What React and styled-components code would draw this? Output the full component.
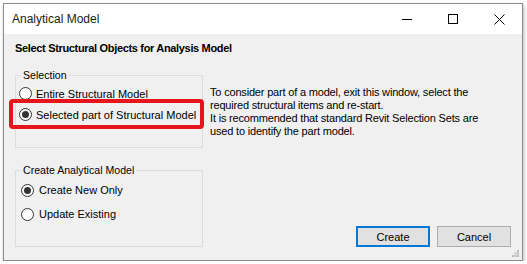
import React from "react";
import styled, { createGlobalStyle } from "styled-components";

const GlobalStyle = createGlobalStyle`
  html, body {
    margin: 0;
    padding: 0;
    background: #ffffff;
  }
  body {
    font-family: "Liberation Sans", Arial, sans-serif;
    color: #000;
  }
`;

const Window = styled.div`
  position: relative;
  box-sizing: border-box;
  margin: 3px 0 0 3px;
  width: 520px;
  height: 258px;
  border: 1px solid #8c8c8c;
  background: #f0f0f0;
  display: flex;
  flex-direction: column;
  box-shadow: 1px 2px 4px rgba(0, 0, 0, 0.28);
`;

const TitleBar = styled.div`
  height: 30px;
  background: #ffffff;
  display: flex;
  align-items: center;
  flex-shrink: 0;
`;

const Title = styled.span`
  padding-left: 8px;
  font-size: 12px;
  color: #1a1a1a;
`;

const Controls = styled.div`
  margin-left: auto;
  display: flex;
  height: 100%;
`;

const CaptionButton = styled.div`
  width: 46px;
  height: 30px;
  display: flex;
  align-items: center;
  justify-content: center;
  svg {
    display: block;
  }
`;

const Body = styled.div`
  flex: 1;
  display: flex;
  flex-direction: column;
  padding: 8px 0 13px 11px;
`;

const Heading = styled.div`
  font-size: 11px;
  font-weight: bold;
  line-height: 13px;
  letter-spacing: -0.33px;
`;

const Main = styled.div`
  flex: 1;
  display: flex;
  margin-top: 13px;
`;

const LeftCol = styled.div`
  width: 188px;
  display: flex;
  flex-direction: column;
  flex-shrink: 0;
`;

const Group = styled.fieldset`
  box-sizing: border-box;
  margin: ${(p) => p.$top}px 0 0 0;
  height: ${(p) => p.$height}px;
  border: 1px solid #dcdcdc;
  padding: 1px 0 0 ${(p) => p.$inset}px;
  min-width: 0;
`;

const Legend = styled.legend`
  font-size: 10.6px;
  line-height: 14px;
  padding: 0 2px;
  margin-left: ${(p) => p.$shift}px;
  color: #000;
`;

const Option = styled.div`
  position: relative;
  display: flex;
  align-items: center;
  gap: ${(p) => p.$gap}px;
  height: ${(p) => p.$row}px;
  font-size: 11px;

  ${(p) =>
    p.$marked &&
    `
    &::after {
      content: "";
      position: absolute;
      left: -10px;
      top: -5px;
      width: 195px;
      height: 30px;
      box-sizing: border-box;
      border: 4px solid #e8141c;
      border-radius: 4px;
    }
  `}
`;

const Radio = styled.span`
  box-sizing: border-box;
  width: 13px;
  height: 13px;
  border-radius: 50%;
  border: 1px solid #333333;
  background: #ffffff;
  display: flex;
  align-items: center;
  justify-content: center;
  flex-shrink: 0;

  &::before {
    content: "";
    width: 7px;
    height: 7px;
    border-radius: 50%;
    background: ${(p) => (p.$checked ? "#333333" : "transparent")};
  }
`;

const RightCol = styled.div`
  flex: 1;
  display: flex;
  flex-direction: column;
  justify-content: space-between;
  padding-left: 7px;
`;

const Description = styled.div`
  margin-top: 18px;
  font-size: 11px;
  line-height: 13px;
  letter-spacing: -0.18px;
  white-space: nowrap;
`;

const Buttons = styled.div`
  display: flex;
  justify-content: flex-end;
  gap: 7px;
  padding-right: 11px;
`;

const Button = styled.div`
  box-sizing: border-box;
  width: 74px;
  height: 21px;
  background: #e1e1e1;
  border: ${(p) => (p.$primary ? "2px solid #0078d7" : "1px solid #adadad")};
  font-size: 11px;
  display: flex;
  align-items: center;
  justify-content: center;
`;

const Grip = styled.svg`
  position: absolute;
  right: 3px;
  bottom: 3px;
`;

function Option2({ checked, marked, gap, row, children }) {
  return (
    <Option $gap={gap} $row={row} $marked={marked}>
      <Radio $checked={checked} />
      <span>{children}</span>
    </Option>
  );
}

export default function App() {
  return (
    <>
      <GlobalStyle />
      <Window>
        <TitleBar>
          <Title>Analytical Model</Title>
          <Controls>
            <CaptionButton>
              <svg width="10" height="10" viewBox="0 0 10 10">
                <line x1="0" y1="5.5" x2="10" y2="5.5" stroke="#000" strokeWidth="1" />
              </svg>
            </CaptionButton>
            <CaptionButton>
              <svg width="10" height="10" viewBox="0 0 10 10">
                <rect x="0.5" y="0.5" width="9" height="9" fill="none" stroke="#000" strokeWidth="1" />
              </svg>
            </CaptionButton>
            <CaptionButton>
              <svg width="11" height="11" viewBox="0 0 11 11">
                <path d="M0.5 0.5 L10.5 10.5 M10.5 0.5 L0.5 10.5" stroke="#000" strokeWidth="1" />
              </svg>
            </CaptionButton>
          </Controls>
        </TitleBar>
        <Body>
          <Heading>Select Structural Objects for Analysis Model</Heading>
          <Main>
            <LeftCol>
              <Group $top={0} $height={80} $inset={3}>
                <Legend $shift={2}>Selection</Legend>
                <Option2 gap={4} row={21}>Entire Structural Model</Option2>
                <Option2 gap={4} row={21} checked marked>
                  Selected part of Structural Model
                </Option2>
              </Group>
              <Group $top={15} $height={84} $inset={5}>
                <Legend $shift={0}>Create Analytical Model</Legend>
                <Option2 gap={5} row={24} checked>Create New Only</Option2>
                <Option2 gap={5} row={24}>Update Existing</Option2>
              </Group>
            </LeftCol>
            <RightCol>
              <Description>
                To consider part of a model, exit this window, select the
                <br />
                required structural items and re-start.
                <br />
                It is recommended that standard Revit Selection Sets are
                <br />
                used to identify the part model.
              </Description>
              <Buttons>
                <Button $primary>Create</Button>
                <Button>Cancel</Button>
              </Buttons>
            </RightCol>
          </Main>
        </Body>
        <Grip width="7" height="7" viewBox="0 0 7 7">
          <rect x="5" y="0" width="2" height="2" fill="#bcbcbc" />
          <rect x="2.5" y="2.5" width="2" height="2" fill="#bcbcbc" />
          <rect x="5" y="2.5" width="2" height="2" fill="#bcbcbc" />
          <rect x="0" y="5" width="2" height="2" fill="#bcbcbc" />
          <rect x="2.5" y="5" width="2" height="2" fill="#bcbcbc" />
          <rect x="5" y="5" width="2" height="2" fill="#bcbcbc" />
        </Grip>
      </Window>
    </>
  );
}
